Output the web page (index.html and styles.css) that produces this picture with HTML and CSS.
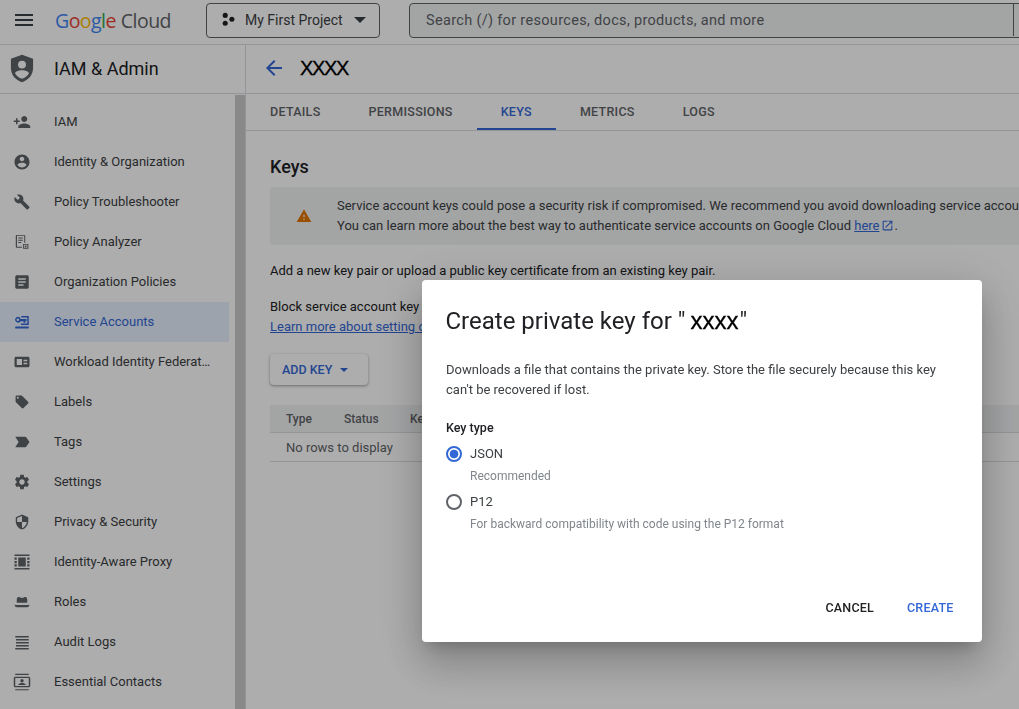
FILE: index.html
```html
<!DOCTYPE html>
<html lang="en">
<head>
<meta charset="utf-8">
<title>Create private key</title>
<link rel="stylesheet" href="styles.css">
</head>
<body>
<div class="app">
  <header class="topbar">
    <svg class="menu-icon" viewBox="0 0 24 24"><path d="M3 18h18v-2H3v2zm0-5h18v-2H3v2zm0-7v2h18V6H3z"/></svg>
    <div class="logo"><span class="g-blue">G</span><span class="g-red">o</span><span class="g-yellow">o</span><span class="g-blue">g</span><span class="g-green">l</span><span class="g-red">e</span><span class="logo-cloud">Cloud</span></div>
    <button class="project">
      <svg class="project-dots" viewBox="0 0 16 16"><circle cx="4.5" cy="3.6" r="2.7"/><circle cx="4.5" cy="12" r="2.7"/><circle cx="11.6" cy="7.8" r="2.7"/></svg>
      <span class="project-name">My First Project</span>
      <span class="caret-lg"></span>
    </button>
    <div class="search"><span class="search-text">Search (/) for resources, docs, products, and more</span><span class="search-divider"></span></div>
  </header>
  <div class="body">
    <aside class="sidebar">
      <div class="side-head">
        <svg class="shield" viewBox="0 0 26 30"><path fill-rule="evenodd" d="M13 0L1 4.5v10C1 22 6 27.500 13 30c7-2.500 12-8 12-15.500v-10L13 0zm0 6.500a4.300 4.300 0 1 1 0 8.600 4.300 4.300 0 0 1 0-8.600zm0 10.300c3.700 0 7.500 1.400 7.500 3.500-1.700 2.700-4.300 4.700-7.500 5.700-3.200-1-5.800-3-7.500-5.700 0-2.100 3.800-3.500 7.500-3.500z"/></svg>
        <span class="side-title">IAM &amp; Admin</span>
      </div>
      <div class="side-scroll">
        <nav class="nav">
          <a class="nav-item"><svg class="ico" viewBox="0 0 24 24"><path d="M15 12c2.210 0 4-1.790 4-4s-1.790-4-4-4-4 1.790-4 4 1.790 4 4 4zm-9-2V7H4v3H1v2h3v3h2v-3h3v-2H6zm9 4c-2.670 0-8 1.340-8 4v2h16v-2c0-2.660-5.330-4-8-4z"/></svg><span>IAM</span></a>
          <a class="nav-item"><svg class="ico" viewBox="0 0 24 24"><path d="M12 2C6.480 2 2 6.480 2 12s4.480 10 10 10 10-4.480 10-10S17.520 2 12 2zm0 3c1.660 0 3 1.340 3 3s-1.340 3-3 3-3-1.340-3-3 1.340-3 3-3zm0 14.200c-2.500 0-4.710-1.280-6-3.220.03-1.990 4-3.080 6-3.080 1.990 0 5.970 1.090 6 3.080-1.290 1.940-3.500 3.220-6 3.220z"/></svg><span>Identity &amp; Organization</span></a>
          <a class="nav-item"><svg class="ico" viewBox="-1 -1 26 26"><path d="M22.700 19l-9.100-9.100c.9-2.300.4-5-1.500-6.900-2-2-5-2.400-7.400-1.300L9 6 6 9 1.600 4.700C.4 7.100.9 10.100 2.900 12.100c1.900 1.900 4.600 2.400 6.900 1.500l9.100 9.100c.4.4 1 .4 1.400 0l2.300-2.300c.5-.4.5-1.100.1-1.400z"/></svg><span>Policy Troubleshooter</span></a>
          <a class="nav-item"><svg class="ico" viewBox="0 0 24 24"><path fill-rule="evenodd" d="M5 2.500h10c.8 0 1.300.5 1.300 1.300V13H15V3.800H5.300v14.400H12v1.300H5c-.8 0-1.300-.5-1.300-1.300V3.800c0-.8.5-1.300 1.300-1.300zM7 6h6v1.300H7V6zm0 3h6v1.300H7V9zm0 3h4v1.300H7V12zm6.500 2.500h7v6.500h-7v-6.500zm1.300 1.300v3.900h4.400v-3.900h-4.400zm2.200.7a1.200 1.200 0 1 1 0 2.400 1.200 1.200 0 0 1 0-2.400z"/></svg><span>Policy Analyzer</span></a>
          <a class="nav-item"><svg class="ico" viewBox="0 0 24 24"><path d="M19 3H5c-1.100 0-2 .9-2 2v14c0 1.100.9 2 2 2h14c1.100 0 2-.9 2-2V5c0-1.100-.9-2-2-2zm-5 14H7v-2h7v2zm3-4H7v-2h10v2zm0-4H7V7h10v2z"/></svg><span>Organization Policies</span></a>
          <a class="nav-item active"><svg class="ico" viewBox="0 0 24 24"><path fill-rule="evenodd" d="M3 18h18v2.500H3V18zM21 4v12H10.500v-2H19V6h-8V4h10zM6.500 5a4 4 0 0 1 3.800 3H18v3h-1.500v2H14v-2h-3.700a4 4 0 1 1-3.800-6zm0 2.200a1.800 1.800 0 1 0 0 3.600 1.800 1.800 0 0 0 0-3.600z"/></svg><span>Service Accounts</span></a>
          <a class="nav-item"><svg class="ico" viewBox="0 0 24 24"><path fill-rule="evenodd" d="M4 5h16c1.100 0 2 .9 2 2v10c0 1.100-.9 2-2 2H4c-1.100 0-2-.9-2-2V7c0-1.100.9-2 2-2zm1 3v8h7V8H5zm9 1v2h5V9h-5zm0 4v2h5v-2h-5z"/></svg><span class="clip">Workload Identity Federation</span></a>
          <a class="nav-item"><svg class="ico" viewBox="-2 -2 28 28"><path d="M21.410 11.580l-9-9C12.050 2.220 11.550 2 11 2H4c-1.100 0-2 .9-2 2v7c0 .55.22 1.050.59 1.420l9 9c.36.36.86.58 1.410.58.55 0 1.050-.22 1.410-.59l7-7c.37-.36.59-.86.59-1.410 0-.55-.23-1.060-.59-1.420zM5.500 7C4.670 7 4 6.330 4 5.500S4.670 4 5.500 4 7 4.670 7 5.500 6.330 7 5.500 7z"/></svg><span>Labels</span></a>
          <a class="nav-item"><svg class="ico" viewBox="0 0 24 24"><path d="M3 5h13c.7 0 1.300.3 1.600.8L22 12l-4.400 6.200c-.3.5-.9.8-1.600.8H3l4.500-7L3 5z"/></svg><span>Tags</span></a>
          <a class="nav-item"><svg class="ico" viewBox="0 0 24 24"><path d="M19.140 12.940c.04-.3.06-.61.06-.94 0-.32-.02-.64-.07-.94l2.030-1.580c.18-.14.23-.41.12-.61l-1.920-3.320c-.12-.22-.37-.29-.59-.22l-2.390.96c-.5-.38-1.030-.7-1.620-.94l-.36-2.540c-.04-.24-.24-.41-.48-.41h-3.840c-.24 0-.43.17-.47.41l-.36 2.540c-.59.24-1.130.57-1.620.94l-2.390-.96c-.22-.08-.47 0-.59.22L2.740 8.870c-.12.21-.08.47.12.61l2.030 1.580c-.05.3-.09.63-.09.94s.02.64.07.94l-2.030 1.580c-.18.14-.23.41-.12.61l1.920 3.320c.12.22.37.29.59.22l2.390-.96c.5.38 1.030.7 1.620.94l.36 2.540c.05.24.24.41.48.41h3.840c.24 0 .44-.17.47-.41l.36-2.540c.59-.24 1.130-.56 1.620-.94l2.390.96c.22.08.47 0 .59-.22l1.920-3.320c.12-.22.07-.47-.12-.61l-2.010-1.580zM12 15.600c-1.980 0-3.600-1.620-3.600-3.600s1.620-3.600 3.600-3.600 3.600 1.620 3.600 3.600-1.620 3.600-3.600 3.600z"/></svg><span>Settings</span></a>
          <a class="nav-item"><svg class="ico" viewBox="-1 -1 26 26"><path d="M12 1L3 5v6c0 5.550 3.840 10.740 9 12 5.160-1.260 9-6.450 9-12V5l-9-4zm0 10.990h7c-.53 4.120-3.280 7.790-7 8.940V12H5V6.300l7-3.110v8.800z"/></svg><span>Privacy &amp; Security</span></a>
          <a class="nav-item"><svg class="ico" viewBox="0 0 24 24"><path d="M2 2h20v2H2V2zm0 18h20v2H2v-2zM7 6h10v12H7V6zM2 6h3v3H2V6zm0 4.500h3v3H2v-3zM2 15h3v3H2v-3zM19 6h3v3h-3V6zm0 4.500h3v3h-3v-3zm0 4.500h3v3h-3v-3z"/></svg><span>Identity-Aware Proxy</span></a>
          <a class="nav-item"><svg class="ico" viewBox="0 0 24 24"><path d="M6 6c1-.8 2.500-.6 3.500 0 1.500.7 3.500.7 5 0 1-.6 2.500-.8 3.500 0 .8.6 1 2 1 3.500V13H5V9.500C5 8 5.200 6.600 6 6zM2 15.500c3 .3 7 .5 10 .5s7-.2 10-.5c0 2-2 3.500-5 3.500H7c-3 0-5-1.500-5-3.500z"/></svg><span>Roles</span></a>
          <a class="nav-item"><svg class="ico" viewBox="0 0 24 24"><path d="M3 4h18v2H3V4zm1 4h17v2H4V8zm0 4h17v2H4v-2zm0 4h17v2H4v-2zm-1 4h18v2H3v-2z"/></svg><span>Audit Logs</span></a>
          <a class="nav-item"><svg class="ico" viewBox="0 0 24 24"><path fill-rule="evenodd" d="M3 1h18v1.500H3V1zm0 20.500h18V23H3v-1.500zM3 5h18c1 0 2 .9 2 2v10c0 1.100-1 2-2 2H3c-1 0-2-.9-2-2V7c0-1.100 1-2 2-2zm0 1.800V17.200h18V6.800H3zM12 8a2.300 2.300 0 1 1 0 4.600A2.300 2.300 0 0 1 12 8zm-5 8c0-1.800 3.300-2.600 5-2.600s5 .8 5 2.600H7z"/></svg><span>Essential Contacts</span></a>
        </nav>
        <div class="thumb"></div>
      </div>
    </aside>
    <main class="main">
      <div class="title-row">
        <svg class="back" viewBox="0 0 24 24"><path d="M20 11H7.830l5.590-5.590L12 4l-8 8 8 8 1.410-1.410L7.830 13H20v-2z"/></svg>
        <h1 class="acct-title">XXXX</h1>
      </div>
      <div class="tabs">
        <a class="tab">DETAILS</a>
        <a class="tab">PERMISSIONS</a>
        <a class="tab tab-active">KEYS</a>
        <a class="tab">METRICS</a>
        <a class="tab">LOGS</a>
      </div>
      <section class="content">
        <h2 class="keys-h">Keys</h2>
        <div class="callout">
          <svg class="warn" viewBox="0 0 24 24"><path d="M1 21h22L12 2 1 21zm12-3h-2v-2h2v2zm0-4h-2v-4h2v4z"/></svg>
          <div class="callout-text">
            <div>Service account keys could pose a security risk if compromised. We recommend you avoid downloading service account keys and instead use Workload Identity Federation.</div>
            <div>You can learn more about the best way to authenticate service accounts on Google Cloud <a class="link">here<svg class="ext" viewBox="0 0 24 24"><path d="M19 19H5V5h7V3H5c-1.110 0-2 .9-2 2v14c0 1.100.89 2 2 2h14c1.100 0 2-.9 2-2v-7h-2v7zM14 3v2h3.590l-9.830 9.830 1.410 1.410L19 6.410V10h2V3h-7z"/></svg></a>.</div>
          </div>
        </div>
        <p class="para-add">Add a new key pair or upload a public key certificate from an existing key pair.</p>
        <p class="para-block">Block service account key creation using organization policies.<br><a class="link">Learn more about setting organization policies for service accounts</a></p>
        <button class="add-key">ADD KEY<span class="caret-sm"></span></button>
        <div class="table">
          <div class="t-head"><span class="col-type">Type</span><span class="col-status">Status</span><span>Key</span></div>
          <div class="t-row">No rows to display</div>
        </div>
      </section>
    </main>
  </div>
</div>
<div class="overlay">
  <div class="dialog">
    <h2 class="d-title">Create private key for " <span class="d-x">xxxx</span>"</h2>
    <p class="d-text">Downloads a file that contains the private key. Store the file securely because this key can't be recovered if lost.</p>
    <div class="d-label">Key type</div>
    <div class="opt"><span class="radio radio-on"></span><span class="opt-name">JSON</span></div>
    <div class="opt-hint">Recommended</div>
    <div class="opt opt-second"><span class="radio"></span><span class="opt-name">P12</span></div>
    <div class="opt-hint">For backward compatibility with code using the P12 format</div>
    <div class="d-actions"><a class="d-btn">CANCEL</a><a class="d-btn d-create">CREATE</a></div>
  </div>
</div>
</body>
</html>
```
FILE: styles.css
```css
* { box-sizing: border-box; }
html, body { margin: 0; height: 100%; overflow: hidden; }
body { font-family: Roboto, "Liberation Sans", sans-serif; font-size: 13px; color: #202124; background: #fff; }
p, h1, h2 { margin: 0; font-weight: 400; }
button { font-family: inherit; }

.app { height: 709px; display: flex; flex-direction: column; overflow: hidden; }

/* top bar */
.topbar { height: 45px; flex: none; display: flex; align-items: flex-start; border-bottom: 1px solid #dadce0; padding-left: 12px; overflow: hidden; }
.menu-icon { width: 24px; height: 24px; margin-top: 8px; fill: #3c4043; flex: none; }
.logo { width: 151px; flex: none; margin: 7px 0 0 19px; font-family: "Open Sans", sans-serif; font-size: 19.500px; line-height: 28px; letter-spacing: -.55px; white-space: nowrap; }
.g-blue { color: #4285f4; } .g-red { color: #ea4335; } .g-yellow { color: #fbbc04; } .g-green { color: #34a853; }
.logo-cloud { color: #5f6368; margin-left: 5px; }
.project { width: 174px; height: 35px; flex: none; margin-top: 3px; background: #fff; border: 1px solid #5f6368; border-radius: 4px; display: flex; align-items: center; padding: 0 14px 2px; }
.project-dots { width: 15px; height: 15px; fill: #202124; flex: none; }
.project-name { margin-left: 9px; font-size: 14px; color: #3c4043; white-space: nowrap; }
.caret-lg { margin-left: 11px; border: 6px solid transparent; border-top-color: #3c4043; border-bottom: 0; }
.search { width: 640px; height: 35px; margin: 3px 0 0 29px; background: #f1f3f4; border: 1px solid #5f6368; border-radius: 4px 0 0 4px; display: flex; align-items: center; padding-left: 16px; position: relative; flex: none; }
.search-text { font-size: 14.500px; letter-spacing: .32px; color: #5f6368; white-space: nowrap; }
.search-divider { position: absolute; left: 603px; top: 0; bottom: 1px; width: 1px; background: #5f6368; }

.body { flex: 1; min-height: 0; display: flex; }

/* sidebar */
.sidebar { width: 246px; flex: none; border-right: 1px solid #dadce0; display: flex; flex-direction: column; }
.side-head { height: 49px; flex: none; display: flex; align-items: center; border-bottom: 1px solid #dadce0; padding: 0 0 2px 10px; }
.shield { width: 24px; height: 29px; fill: #5f6368; flex: none; }
.side-title { margin-left: 20px; font-size: 18px; color: #202124; }
.side-scroll { flex: 1; min-height: 0; display: flex; }
.nav { width: 229px; padding-top: 8px; flex: none; }
.thumb { width: 10px; margin: 1px 0 0 6px; background: #cbcbcb; flex: none; }
.nav-item { height: 40px; display: flex; align-items: center; padding: 0 0 1px 13px; color: #3c4043; white-space: nowrap; }
.nav-item span { margin-left: 23px; }
.nav-item .clip { width: 157px; overflow: hidden; text-overflow: ellipsis; }
.ico { width: 18px; height: 18px; fill: #5f6368; flex: none; }
.active { background: #e8f0fe; color: #3367d6; }
.active .ico { fill: #3367d6; }

/* main */
.main { flex: 1; min-width: 0; overflow: hidden; }
.title-row { height: 49px; display: flex; align-items: center; padding: 0 0 2px 16px; border-bottom: 1px solid #dadce0; }
.back { width: 24px; height: 24px; fill: #3367d6; flex: none; }
.acct-title { margin-left: 14px; font-family: "Liberation Sans", sans-serif; font-size: 20px; color: #000; letter-spacing: -1.300px; -webkit-text-stroke: .3px #000; }
.tabs { height: 37px; display: flex; border-bottom: 1px solid #dadce0; }
.tab { padding: 0 24px; height: 36px; line-height: 36px; font-size: 12.500px; font-weight: 500; letter-spacing: .28px; color: #5f6368; }
.tab-active { color: #3367d6; border-bottom: 2px solid #3367d6; }
.content { padding: 24px 0 0 24px; width: 1200px; }
.keys-h { font-size: 18px; line-height: 24px; font-weight: 500; color: #202124; }
.callout { margin-top: 8px; height: 58px; background: #f1f3f4; border-radius: 4px; display: flex; align-items: center; padding-left: 26px; }
.warn { width: 16px; height: 16px; fill: #e37400; flex: none; }
.callout-text { margin-left: 25px; line-height: 20px; white-space: nowrap; color: #3c4043; }
.link { color: #3367d6; text-decoration: underline; }
.ext { width: 13px; height: 13px; fill: #3367d6; margin: 0 0 -2px 2px; }
.para-add { margin-top: 16px; line-height: 20px; }
.para-block { margin-top: 16px; line-height: 20px; white-space: nowrap; }
.add-key { display: flex; align-items: center; margin-top: 17px; height: 31px; width: 98px; padding: 0 0 0 12px; border: 0; border-radius: 4px; background: #fff; color: #3367d6; font-size: 12.500px; font-weight: 500; box-shadow: 0 1px 2px rgba(60,64,67,.3), 0 1px 3px 1px rgba(60,64,67,.15); }
.caret-sm { margin-left: 8px; border: 4px solid transparent; border-top-color: #3367d6; border-bottom: 0; }
.table { margin-top: 20px; width: 900px; }
.t-head { height: 28px; background: #f1f3f4; border-bottom: 1px solid #dadce0; display: flex; align-items: center; padding-left: 16px; font-weight: 500; font-size: 12px; color: #5f6368; }
.col-type { width: 58px; } .col-status { width: 66px; }
.t-row { height: 29px; display: flex; align-items: center; padding-left: 16px; border-bottom: 1px solid #dadce0; color: #5f6368; }

/* dialog */
.overlay { position: fixed; inset: 0; background: rgba(0,0,0,.32); }
.dialog { position: absolute; left: 422px; top: 280px; width: 560px; height: 362px; background: #fff; border-radius: 4px; padding: 25px 24px 24px; display: flex; flex-direction: column; box-shadow: 0 11px 15px -7px rgba(0,0,0,.2), 0 24px 38px 3px rgba(0,0,0,.14), 0 9px 46px 8px rgba(0,0,0,.12); }
.d-title { font-size: 24px; line-height: 32px; color: #202124; white-space: nowrap; margin-left: -.5px; }
.d-x { font-family: "Liberation Sans", sans-serif; color: #000; margin: 0 1px 0 -1px; -webkit-text-stroke: .3px #000; }
.d-text { margin-top: 23px; line-height: 20px; color: #3c4043; }
.d-label { margin-top: 18px; line-height: 20px; font-weight: 500; font-size: 12.500px; color: #202124; }
.opt { display: flex; align-items: center; height: 16px; margin-top: 8px; }
.opt-second { margin-top: 10px; }
.radio { width: 16px; height: 16px; border: 2px solid #5f6368; border-radius: 50%; flex: none; }
.radio-on { border-color: #3367d6; background: radial-gradient(circle, #3367d6 0 4px, #fff 4.700px); }
.opt-name { margin-left: 8px; color: #3c4043; padding-bottom: 1px; }
.opt-hint { margin: 6px 0 0 24px; font-size: 12px; line-height: 16px; color: #80868b; }
.d-actions { margin-top: auto; display: flex; justify-content: flex-end; gap: 33px; padding-right: 4.500px; }
.d-btn { font-size: 12.500px; font-weight: 500; line-height: 20px; color: #202124; letter-spacing: .2px; }
.d-create { color: #3367d6; }
```
